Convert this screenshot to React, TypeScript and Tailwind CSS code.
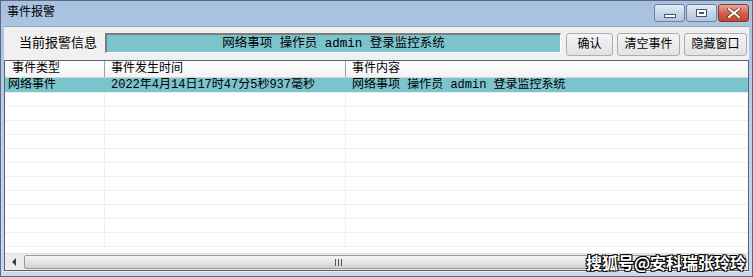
import React from "react";

const FONT = "[font-family:'Liberation_Mono','Noto_Sans_CJK_SC',monospace]";

function CapBtn({ kind }: { kind: "min" | "max" | "close" }) {
  if (kind === "close") {
    return (
      <div className="w-[31px] h-[18px] rounded-[3px] border border-[#7a3a30] bg-gradient-to-b from-[#e8a99c] via-[#d0604a] to-[#c4452e] flex items-center justify-center">
        <svg width="14" height="10" viewBox="0 0 14 10">
          <path d="M2 1 L12 9 M12 1 L2 9" stroke="#4a2a26" strokeWidth="3.2" strokeLinecap="square" />
          <path d="M2 1 L12 9 M12 1 L2 9" stroke="#ffffff" strokeWidth="2" strokeLinecap="square" />
        </svg>
      </div>
    );
  }
  return (
    <div className="w-[31px] h-[18px] rounded-[3px] border border-[#6f819a] bg-gradient-to-b from-[#e4edf7] via-[#c6d6ea] to-[#b1c6e0] flex items-center justify-center">
      {kind === "min" ? (
        <div className="w-[12px] h-[4px] mt-[5px] bg-white border border-[#46566b]" />
      ) : (
        <div className="w-[11px] h-[8px] bg-white border border-[#46566b] flex items-center justify-center">
          <div className="w-[5px] h-[2px] border border-[#46566b]" />
        </div>
      )}
    </div>
  );
}

function Btn({ w, children }: { w: string; children: React.ReactNode }) {
  return (
    <div
      className={`${w} h-[23px] rounded-[3px] border border-[#acacac] bg-gradient-to-b from-[#f4f4f4] to-[#e2e2e2] flex items-center justify-center text-[12px] text-black`}
    >
      {children}
    </div>
  );
}

export default function App() {
  const rows = Array.from({ length: 11 });
  return (
    <div className={`w-[753px] h-[277px] relative overflow-hidden ${FONT} text-black`}>
      <div className="w-[753px] h-[277px] flex flex-col border border-[#5b6a7e] bg-gradient-to-b from-[#a8c1e0] via-[#bcd2ec] to-[#c6d9ef]">
        {/* title bar */}
        <div className="h-[25px] flex items-start shrink-0">
          <div className="pl-[6px] pt-[5px] text-[12px] leading-[14px]">事件报警</div>
          <div className="ml-auto flex gap-[1px] pt-[3px] pr-[3px]">
            <CapBtn kind="min" />
            <CapBtn kind="max" />
            <CapBtn kind="close" />
          </div>
        </div>
        {/* client */}
        <div className="mx-[3px] flex-1 flex flex-col bg-[#f0f0f0] border-t border-[#8ea4c0]">
          <div className="h-[33px] flex items-start pt-[6px] shrink-0">
            <div className="w-[101px] pl-[15px] pt-[3px] text-[13px] leading-[16px]">当前报警信息</div>
            <div className="w-[456px] h-[20px] border-t-2 border-l-2 border-t-[#7d7d7d] border-l-[#7d7d7d] border-b border-r border-b-white border-r-white bg-[#7bc4cc] flex items-center justify-center text-[12.5px] leading-[14px]">
              网络事项 操作员 admin 登录监控系统
            </div>
            <div className="flex gap-[4px] ml-[5px]">
              <Btn w="w-[47px]">确认</Btn>
              <Btn w="w-[63px]">清空事件</Btn>
              <Btn w="w-[63px]">隐藏窗口</Btn>
            </div>
          </div>
          {/* table */}
          <div className="flex-1 flex flex-col border border-[#5a6070] bg-white overflow-hidden">
            <div className="h-[17px] flex shrink-0 text-[12px] leading-[16px] bg-gradient-to-b from-white to-[#f2f2f2] border-b border-[#d5d5d5]">
              <div className="w-[100px] pl-[7px] border-r border-[#a0a0a0]">事件类型</div>
              <div className="w-[241px] pl-[6px] border-r border-[#a0a0a0]">事件发生时间</div>
              <div className="flex-1 pl-[6px]">事件内容</div>
            </div>
            <div className="flex-1 overflow-hidden">
              <div className="h-[15px] flex bg-[#7bc4cc] text-[12px] leading-[14px] border-b border-[#eeeeee]">
                <div className="w-[100px] pl-[3px] whitespace-nowrap">网络事件</div>
                <div className="w-[241px] pl-[6px] whitespace-nowrap">2022年4月14日17时47分5秒937毫秒</div>
                <div className="flex-1 pl-[6px] whitespace-nowrap">网络事项 操作员 admin 登录监控系统</div>
              </div>
              {rows.map((_, i) => (
                <div key={i} className="h-[14px] flex border-b border-[#efefef]">
                  <div className="w-[100px] border-r border-[#efefef]" />
                  <div className="w-[241px] border-r border-[#efefef]" />
                  <div className="flex-1" />
                </div>
              ))}
            </div>
            {/* scrollbar */}
            <div className="h-[17px] flex items-stretch shrink-0 bg-[#ececec] border-t border-[#e0e0e0]">
              <div className="w-[18px] flex items-center justify-center">
                <svg width="5" height="8" viewBox="0 0 5 8">
                  <path d="M4 0 L0 4 L4 8 Z" fill="#404040" />
                </svg>
              </div>
              <div className="flex-1 my-[1px] ml-[1px] mr-[2px] rounded-[2px] border border-[#9a9a9a] bg-gradient-to-b from-[#f4f4f4] via-[#e6e6e6] to-[#cfcfcf] flex items-center justify-center">
                <div className="flex gap-[2px] ml-[-94px]">
                  <div className="w-[1px] h-[7px] bg-[#555]" />
                  <div className="w-[1px] h-[7px] bg-[#555]" />
                  <div className="w-[1px] h-[7px] bg-[#555]" />
                </div>
              </div>
            </div>
          </div>
          <div className="h-[1px] bg-[#e8eef6] shrink-0" />
        </div>
        <div className="h-[4px] shrink-0" />
      </div>
      <div className="absolute right-[7px] bottom-[6px] text-[16px] leading-[18px] font-bold text-white [font-family:'Noto_Sans_CJK_SC',sans-serif] [text-shadow:1px_1px_0_#000,-1px_-1px_0_#000,1px_-1px_0_#000,-1px_1px_0_#000]">
        搜狐号@安科瑞张玲玲
      </div>
    </div>
  );
}
